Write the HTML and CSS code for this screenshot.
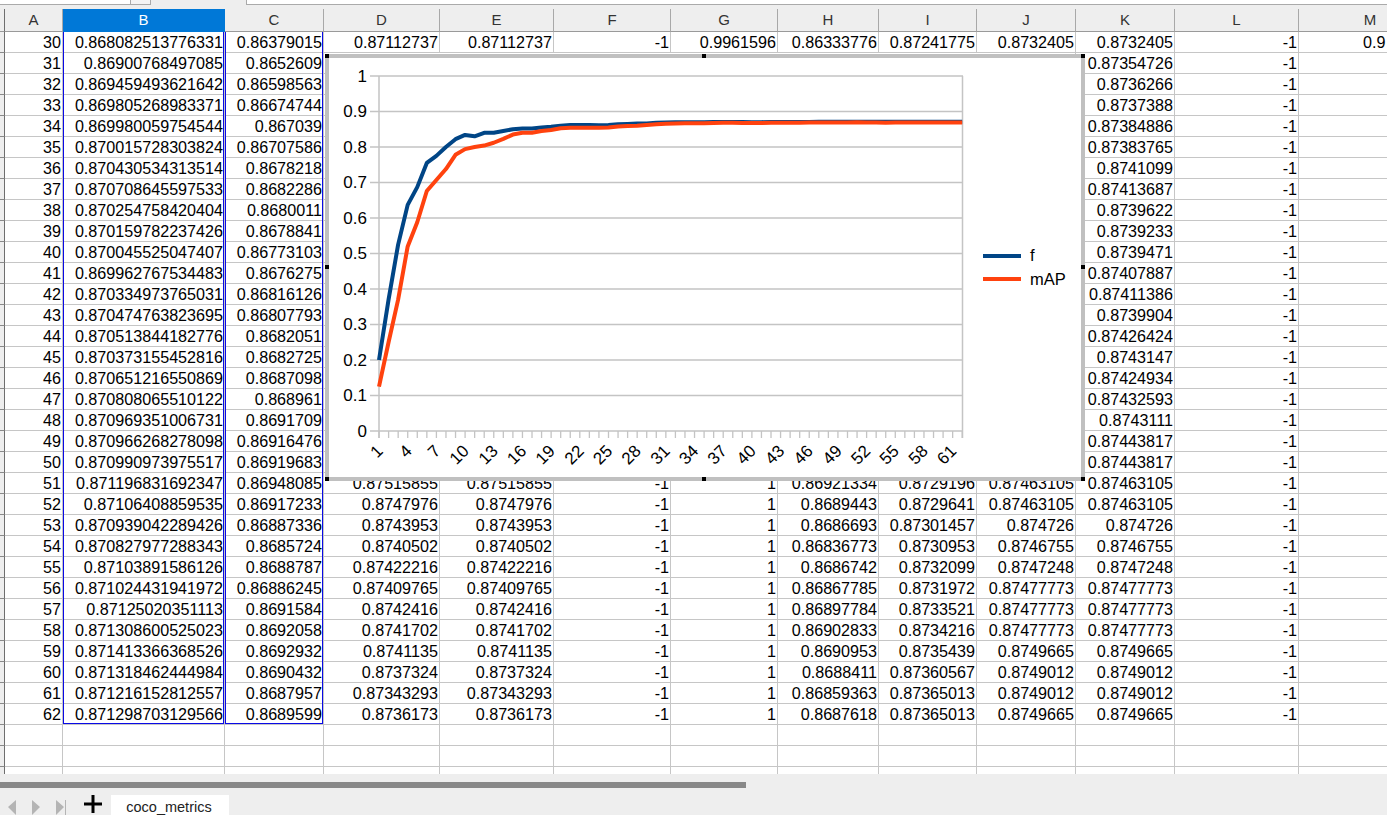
FILE: index.html
```html
<!DOCTYPE html>
<html lang="en">
<head>
<meta charset="utf-8">
<title>coco_metrics</title>
<link rel="stylesheet" href="styles.css">
</head>
<body>
<div class="topstrip"><div class="namebox"></div><div class="namebtn"></div><div class="strip-gap"></div><div class="formula"></div></div>
<main class="sheet">
<div class="row head"><div class="h rh"></div><div class="h">A</div><div class="h on">B</div><div class="h">C</div><div class="h">D</div><div class="h">E</div><div class="h">F</div><div class="h">G</div><div class="h">H</div><div class="h">I</div><div class="h">J</div><div class="h">K</div><div class="h">L</div><div class="h">M</div></div>
<div class="row"><div class="c rh"></div><div class="c">30</div><div class="c">0.868082513776331</div><div class="c">0.86379015</div><div class="c">0.87112737</div><div class="c">0.87112737</div><div class="c">-1</div><div class="c">0.9961596</div><div class="c">0.86333776</div><div class="c">0.87241775</div><div class="c">0.8732405</div><div class="c">0.8732405</div><div class="c">-1</div><div class="c edge">0.9</div></div>
<div class="row"><div class="c rh"></div><div class="c">31</div><div class="c">0.86900768497085</div><div class="c">0.8652609</div><div class="c under"></div><div class="c">0.87354726</div><div class="c">-1</div><div class="c"></div></div>
<div class="row"><div class="c rh"></div><div class="c">32</div><div class="c">0.869459493621642</div><div class="c">0.86598563</div><div class="c under"></div><div class="c">0.8736266</div><div class="c">-1</div><div class="c"></div></div>
<div class="row"><div class="c rh"></div><div class="c">33</div><div class="c">0.869805268983371</div><div class="c">0.86674744</div><div class="c under"></div><div class="c">0.8737388</div><div class="c">-1</div><div class="c"></div></div>
<div class="row"><div class="c rh"></div><div class="c">34</div><div class="c">0.869980059754544</div><div class="c">0.867039</div><div class="c under"></div><div class="c">0.87384886</div><div class="c">-1</div><div class="c"></div></div>
<div class="row"><div class="c rh"></div><div class="c">35</div><div class="c">0.870015728303824</div><div class="c">0.86707586</div><div class="c under"></div><div class="c">0.87383765</div><div class="c">-1</div><div class="c"></div></div>
<div class="row"><div class="c rh"></div><div class="c">36</div><div class="c">0.870430534313514</div><div class="c">0.8678218</div><div class="c under"></div><div class="c">0.8741099</div><div class="c">-1</div><div class="c"></div></div>
<div class="row"><div class="c rh"></div><div class="c">37</div><div class="c">0.870708645597533</div><div class="c">0.8682286</div><div class="c under"></div><div class="c">0.87413687</div><div class="c">-1</div><div class="c"></div></div>
<div class="row"><div class="c rh"></div><div class="c">38</div><div class="c">0.870254758420404</div><div class="c">0.8680011</div><div class="c under"></div><div class="c">0.8739622</div><div class="c">-1</div><div class="c"></div></div>
<div class="row"><div class="c rh"></div><div class="c">39</div><div class="c">0.870159782237426</div><div class="c">0.8678841</div><div class="c under"></div><div class="c">0.8739233</div><div class="c">-1</div><div class="c"></div></div>
<div class="row"><div class="c rh"></div><div class="c">40</div><div class="c">0.870045525047407</div><div class="c">0.86773103</div><div class="c under"></div><div class="c">0.8739471</div><div class="c">-1</div><div class="c"></div></div>
<div class="row"><div class="c rh"></div><div class="c">41</div><div class="c">0.869962767534483</div><div class="c">0.8676275</div><div class="c under"></div><div class="c">0.87407887</div><div class="c">-1</div><div class="c"></div></div>
<div class="row"><div class="c rh"></div><div class="c">42</div><div class="c">0.870334973765031</div><div class="c">0.86816126</div><div class="c under"></div><div class="c">0.87411386</div><div class="c">-1</div><div class="c"></div></div>
<div class="row"><div class="c rh"></div><div class="c">43</div><div class="c">0.870474763823695</div><div class="c">0.86807793</div><div class="c under"></div><div class="c">0.8739904</div><div class="c">-1</div><div class="c"></div></div>
<div class="row"><div class="c rh"></div><div class="c">44</div><div class="c">0.870513844182776</div><div class="c">0.8682051</div><div class="c under"></div><div class="c">0.87426424</div><div class="c">-1</div><div class="c"></div></div>
<div class="row"><div class="c rh"></div><div class="c">45</div><div class="c">0.870373155452816</div><div class="c">0.8682725</div><div class="c under"></div><div class="c">0.8743147</div><div class="c">-1</div><div class="c"></div></div>
<div class="row"><div class="c rh"></div><div class="c">46</div><div class="c">0.870651216550869</div><div class="c">0.8687098</div><div class="c under"></div><div class="c">0.87424934</div><div class="c">-1</div><div class="c"></div></div>
<div class="row"><div class="c rh"></div><div class="c">47</div><div class="c">0.870808065510122</div><div class="c">0.868961</div><div class="c under"></div><div class="c">0.87432593</div><div class="c">-1</div><div class="c"></div></div>
<div class="row"><div class="c rh"></div><div class="c">48</div><div class="c">0.870969351006731</div><div class="c">0.8691709</div><div class="c under"></div><div class="c">0.8743111</div><div class="c">-1</div><div class="c"></div></div>
<div class="row"><div class="c rh"></div><div class="c">49</div><div class="c">0.870966268278098</div><div class="c">0.86916476</div><div class="c under"></div><div class="c">0.87443817</div><div class="c">-1</div><div class="c"></div></div>
<div class="row"><div class="c rh"></div><div class="c">50</div><div class="c">0.870990973975517</div><div class="c">0.86919683</div><div class="c under"></div><div class="c">0.87443817</div><div class="c">-1</div><div class="c"></div></div>
<div class="row"><div class="c rh"></div><div class="c">51</div><div class="c">0.871196831692347</div><div class="c">0.86948085</div><div class="c">0.87515855</div><div class="c">0.87515855</div><div class="c">-1</div><div class="c">1</div><div class="c">0.86921334</div><div class="c">0.8729196</div><div class="c">0.87463105</div><div class="c">0.87463105</div><div class="c">-1</div><div class="c"></div></div>
<div class="row"><div class="c rh"></div><div class="c">52</div><div class="c">0.87106408859535</div><div class="c">0.86917233</div><div class="c">0.8747976</div><div class="c">0.8747976</div><div class="c">-1</div><div class="c">1</div><div class="c">0.8689443</div><div class="c">0.8729641</div><div class="c">0.87463105</div><div class="c">0.87463105</div><div class="c">-1</div><div class="c"></div></div>
<div class="row"><div class="c rh"></div><div class="c">53</div><div class="c">0.870939042289426</div><div class="c">0.86887336</div><div class="c">0.8743953</div><div class="c">0.8743953</div><div class="c">-1</div><div class="c">1</div><div class="c">0.8686693</div><div class="c">0.87301457</div><div class="c">0.874726</div><div class="c">0.874726</div><div class="c">-1</div><div class="c"></div></div>
<div class="row"><div class="c rh"></div><div class="c">54</div><div class="c">0.870827977288343</div><div class="c">0.8685724</div><div class="c">0.8740502</div><div class="c">0.8740502</div><div class="c">-1</div><div class="c">1</div><div class="c">0.86836773</div><div class="c">0.8730953</div><div class="c">0.8746755</div><div class="c">0.8746755</div><div class="c">-1</div><div class="c"></div></div>
<div class="row"><div class="c rh"></div><div class="c">55</div><div class="c">0.87103891586126</div><div class="c">0.8688787</div><div class="c">0.87422216</div><div class="c">0.87422216</div><div class="c">-1</div><div class="c">1</div><div class="c">0.8686742</div><div class="c">0.8732099</div><div class="c">0.8747248</div><div class="c">0.8747248</div><div class="c">-1</div><div class="c"></div></div>
<div class="row"><div class="c rh"></div><div class="c">56</div><div class="c">0.871024431941972</div><div class="c">0.86886245</div><div class="c">0.87409765</div><div class="c">0.87409765</div><div class="c">-1</div><div class="c">1</div><div class="c">0.86867785</div><div class="c">0.8731972</div><div class="c">0.87477773</div><div class="c">0.87477773</div><div class="c">-1</div><div class="c"></div></div>
<div class="row"><div class="c rh"></div><div class="c">57</div><div class="c">0.87125020351113</div><div class="c">0.8691584</div><div class="c">0.8742416</div><div class="c">0.8742416</div><div class="c">-1</div><div class="c">1</div><div class="c">0.86897784</div><div class="c">0.8733521</div><div class="c">0.87477773</div><div class="c">0.87477773</div><div class="c">-1</div><div class="c"></div></div>
<div class="row"><div class="c rh"></div><div class="c">58</div><div class="c">0.871308600525023</div><div class="c">0.8692058</div><div class="c">0.8741702</div><div class="c">0.8741702</div><div class="c">-1</div><div class="c">1</div><div class="c">0.86902833</div><div class="c">0.8734216</div><div class="c">0.87477773</div><div class="c">0.87477773</div><div class="c">-1</div><div class="c"></div></div>
<div class="row"><div class="c rh"></div><div class="c">59</div><div class="c">0.871413366368526</div><div class="c">0.8692932</div><div class="c">0.8741135</div><div class="c">0.8741135</div><div class="c">-1</div><div class="c">1</div><div class="c">0.8690953</div><div class="c">0.8735439</div><div class="c">0.8749665</div><div class="c">0.8749665</div><div class="c">-1</div><div class="c"></div></div>
<div class="row"><div class="c rh"></div><div class="c">60</div><div class="c">0.871318462444984</div><div class="c">0.8690432</div><div class="c">0.8737324</div><div class="c">0.8737324</div><div class="c">-1</div><div class="c">1</div><div class="c">0.8688411</div><div class="c">0.87360567</div><div class="c">0.8749012</div><div class="c">0.8749012</div><div class="c">-1</div><div class="c"></div></div>
<div class="row"><div class="c rh"></div><div class="c">61</div><div class="c">0.871216152812557</div><div class="c">0.8687957</div><div class="c">0.87343293</div><div class="c">0.87343293</div><div class="c">-1</div><div class="c">1</div><div class="c">0.86859363</div><div class="c">0.87365013</div><div class="c">0.8749012</div><div class="c">0.8749012</div><div class="c">-1</div><div class="c"></div></div>
<div class="row"><div class="c rh"></div><div class="c">62</div><div class="c">0.871298703129566</div><div class="c">0.8689599</div><div class="c">0.8736173</div><div class="c">0.8736173</div><div class="c">-1</div><div class="c">1</div><div class="c">0.8687618</div><div class="c">0.87365013</div><div class="c">0.8749665</div><div class="c">0.8749665</div><div class="c">-1</div><div class="c"></div></div>
<div class="row"><div class="c rh"></div><div class="c"></div><div class="c"></div><div class="c"></div><div class="c"></div><div class="c"></div><div class="c"></div><div class="c"></div><div class="c"></div><div class="c"></div><div class="c"></div><div class="c"></div><div class="c"></div><div class="c"></div></div>
<div class="row"><div class="c rh"></div><div class="c"></div><div class="c"></div><div class="c"></div><div class="c"></div><div class="c"></div><div class="c"></div><div class="c"></div><div class="c"></div><div class="c"></div><div class="c"></div><div class="c"></div><div class="c"></div><div class="c"></div></div>
<div class="row"><div class="c rh"></div><div class="c"></div><div class="c"></div><div class="c"></div><div class="c"></div><div class="c"></div><div class="c"></div><div class="c"></div><div class="c"></div><div class="c"></div><div class="c"></div><div class="c"></div><div class="c"></div><div class="c"></div></div>
<div class="sel sel-b"></div>
<div class="sel sel-c"></div>
<figure class="chart">
<svg class="plot" viewBox="329 58 752 419" width="752" height="419">
<path class="grid" d="M370 76H963M370 111.5H963M370 147H963M370 182.5H963M370 218H963M370 253.5H963M370 289H963M370 324.5H963M370 360H963M370 395.5H963M370 431H963M379 76V438M962.5 76V438"/>
<line class="ticks" x1="378.4" y1="434.5" x2="963" y2="434.5"/>
<g class="ylab">
<text x="367" y="82">1</text><text x="367" y="117">0.9</text><text x="367" y="153">0.8</text><text x="367" y="188">0.7</text><text x="367" y="224">0.6</text><text x="367" y="259">0.5</text><text x="367" y="295">0.4</text><text x="367" y="330">0.3</text><text x="367" y="366">0.2</text><text x="367" y="401">0.1</text><text x="367" y="437">0</text>
</g>
<g class="xlab">
<text transform="translate(384 452) rotate(-45)">1</text><text transform="translate(413 452) rotate(-45)">4</text><text transform="translate(441.5 452) rotate(-45)">7</text><text transform="translate(470 452) rotate(-45)">10</text><text transform="translate(499 452) rotate(-45)">13</text><text transform="translate(527.5 452) rotate(-45)">16</text><text transform="translate(556 452) rotate(-45)">19</text><text transform="translate(585 452) rotate(-45)">22</text><text transform="translate(613.5 452) rotate(-45)">25</text><text transform="translate(642 452) rotate(-45)">28</text><text transform="translate(671 452) rotate(-45)">31</text><text transform="translate(699.5 452) rotate(-45)">34</text><text transform="translate(728 452) rotate(-45)">37</text><text transform="translate(757 452) rotate(-45)">40</text><text transform="translate(785.5 452) rotate(-45)">43</text><text transform="translate(814 452) rotate(-45)">46</text><text transform="translate(843 452) rotate(-45)">49</text><text transform="translate(871.5 452) rotate(-45)">52</text><text transform="translate(900 452) rotate(-45)">55</text><text transform="translate(929 452) rotate(-45)">58</text><text transform="translate(957.5 452) rotate(-45)">61</text>
</g>
<g transform="translate(379 431) scale(9.56 -355)">
<polyline class="s-f" points="0,.2 1,.37 2,.525 3,.637 4,.687 5,.755 6,.775 7,.8 8,.822 9,.834 10,.83 11,.84 12,.84 13,.845 14,.85 15,.852 16,.852 17,.855 18,.857 19,.86 20,.862 21,.862 22,.862 23,.861 24,.862 25,.864 26,.865 27,.866 28,.866 29,.868 30,.869 31,.8695 32,.8698 33,.87 34,.87 35,.8704 36,.8707 37,.8703 38,.8702 39,.87 40,.87 41,.8703 42,.8705 43,.8705 44,.8704 45,.8707 46,.8708 47,.871 48,.871 49,.871 50,.8712 51,.8711 52,.8709 53,.8708 54,.871 55,.871 56,.8713 57,.8713 58,.8714 59,.8713 60,.8712 61,.8713"/>
<polyline class="s-m" points="0,.125 1,.25 2,.37 3,.52 4,.588 5,.676 6,.707 7,.738 8,.778 9,.794 10,.8 11,.804 12,.812 13,.823 14,.835 15,.84 16,.84 17,.845 18,.848 19,.853 20,.854 21,.854 22,.854 23,.854 24,.855 25,.858 26,.859 27,.86 28,.862 29,.8638 30,.8653 31,.866 32,.8667 33,.867 34,.8671 35,.8678 36,.8682 37,.868 38,.8679 39,.8677 40,.8676 41,.8682 42,.8681 43,.8682 44,.8683 45,.8687 46,.869 47,.8692 48,.8692 49,.8692 50,.8695 51,.8692 52,.8689 53,.8686 54,.8689 55,.8689 56,.8692 57,.8692 58,.8693 59,.869 60,.8688 61,.869"/>
</g>
<line class="leg-f" x1="983" y1="256" x2="1021" y2="256"/>
<line class="leg-m" x1="983" y1="279" x2="1021" y2="279"/>
<text class="legt" x="1030" y="261">f</text>
<text class="legt" x="1030" y="285">mAP</text>
</svg>
<span class="hd tl"></span><span class="hd tm"></span><span class="hd tr"></span><span class="hd ml"></span><span class="hd mr"></span><span class="hd bl"></span><span class="hd bm"></span><span class="hd br"></span>
</figure>
</main>
<div class="scrollrow"><div class="thumb"></div></div>
<footer class="tabbar">
<svg class="nav" viewBox="0 0 70 20" width="70" height="20">
<path class="navp" d="M16 5L8 12L16 20ZM32 5L40 12L32 20ZM56 5L64 12L56 20Z"/>
<path class="navl" d="M65.5 5V20"/>
</svg>
<svg class="plus" viewBox="0 0 18 18" width="18" height="18"><path d="M9 0V18M0 9H18"/></svg>
<div class="tab">coco_metrics</div>
</footer>
</body>
</html>
```
FILE: styles.css
```css
* { box-sizing: border-box; }
html, body { margin: 0; height: 815px; overflow: hidden; }
body { display: flex; flex-direction: column; background: #eee; font-family: "Liberation Sans", Arial, sans-serif; color: #000; }

.topstrip { display: flex; height: 9px; flex: none; background: #eee; }
.namebox { width: 130px; height: 5px; background: #fff; border-bottom: 1px solid #aaa; }
.namebtn { width: 21px; height: 5px; background: #f4f4f4; border: 1px solid #aaa; border-top: 0; }
.strip-gap { width: 95px; }
.formula { flex: 1; height: 5px; background: #fff; border-bottom: 1px solid #aaa; border-left: 1px solid #aaa; }

.sheet { position: relative; height: 765px; flex: none; overflow: hidden; background: #fff; }
.row { display: grid; grid-template-columns: 5px 58px 162px 99px 116px 114px 117px 107px 101px 98px 99px 99px 124px 143px; height: 21px; width: 1441px; }
.head { height: 23px; }
.c { border-right: 1px solid #c6c6c6; border-bottom: 1px solid #c6c6c6; padding: 0 1px 0 0; text-align: right; font-size: 16.15px; line-height: 20px; white-space: nowrap; overflow: hidden; }
.c.rh { background: #eee; border-right-color: #6e6e6e; border-bottom-color: #8a8a8a; padding: 0; }
.c.under { grid-column: span 7; }
.c.edge { text-align: left; padding-left: 64px; }
.h { background: #eee; border-right: 1px solid #a8a8a8; border-bottom: 1px solid #9a9a9a; text-align: center; font-size: 15px; line-height: 22px; color: #333; }
.h.rh { border-right-color: #6e6e6e; }
.h.on { background: #0078d7; color: #fff; border-right-color: #0078d7; border-bottom-color: #0078d7; }

.sel { position: absolute; top: 23px; height: 692px; border: 1px solid #0a0ae6; border-top: 0; }
.sel-b { left: 63px; width: 161px; }
.sel-c { left: 225px; width: 98px; }

.chart { position: absolute; left: 325px; top: 45px; width: 760px; height: 427px; margin: 0; border: 4px solid #c0c0c0; background: #fff; }
.plot { display: block; }
.grid { fill: none; stroke: #c4c4c4; stroke-width: 1.5; }
.ticks { stroke: #c4c4c4; stroke-width: 7; stroke-dasharray: 1.3 8.26; }
.ylab text { font-size: 17px; text-anchor: end; fill: #000; }
.xlab text { font-size: 17px; text-anchor: end; fill: #000; }
.s-f, .s-m { fill: none; stroke-width: 4; vector-effect: non-scaling-stroke; stroke-linejoin: round; }
.s-f { stroke: #004586; }
.s-m { stroke: #ff420e; }
.leg-f { stroke: #004586; stroke-width: 4; }
.leg-m { stroke: #ff420e; stroke-width: 4; }
.legt { font-size: 16.5px; fill: #000; }

.hd { position: absolute; width: 4px; height: 4px; background: #000; }
.tl { left: -4px; top: -4px; }
.tm { left: 373px; top: -4px; }
.tr { right: -4px; top: -4px; }
.ml { left: -4px; top: 207px; }
.mr { right: -4px; top: 207px; }
.bl { left: -4px; bottom: -4px; }
.bm { left: 373px; bottom: -4px; }
.br { right: -4px; bottom: -4px; }

.scrollrow { height: 14px; flex: none; padding-top: 8px; background: #eee; }
.thumb { width: 746px; height: 6px; background: #888; }

.tabbar { flex: 1; display: flex; align-items: flex-end; padding-top: 7px; background: #eee; }
.nav { display: block; flex: none; margin-bottom: 0; }
.navp { fill: #b4b4b4; }
.navl { stroke: #b4b4b4; stroke-width: 1; fill: none; }
.plus { flex: none; margin: 0 9px 2px 14px; }
.plus path { stroke: #000; stroke-width: 3; fill: none; }
.tab { width: 118px; height: 20px; padding-right: 2px; background: #fff; font-size: 14.5px; line-height: 25px; text-align: center; color: #222; overflow: hidden; }
```
